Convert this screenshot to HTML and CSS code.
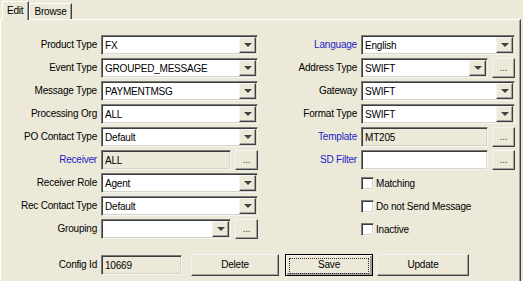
FILE: index.html
```html
<!DOCTYPE html>
<html lang="en">

<head>
    <meta charset="UTF-8">
    <title>Message Config</title>
    <link rel="stylesheet" href="styles.css">
</head>

<body>
    <div class="tabs">
        <div class="tab active">Edit</div>
        <div class="tab">Browse</div>
    </div>

    <div class="pane">
        <div class="form-grid">
            <!-- row 1 -->
            <div class="label">Product Type</div>
            <div class="combo"><span class="value">FX</span><span class="arrow"></span></div>
            <div class="label link">Language</div>
            <div class="combo"><span class="value">English</span><span class="arrow"></span></div>

            <!-- row 2 -->
            <div class="label">Event Type</div>
            <div class="combo"><span class="value">GROUPED_MESSAGE</span><span class="arrow"></span></div>
            <div class="label">Address Type</div>
            <div class="with-btn">
                <div class="combo"><span class="value">SWIFT</span><span class="arrow"></span></div>
                <div class="dots">...</div>
            </div>

            <!-- row 3 -->
            <div class="label">Message Type</div>
            <div class="combo"><span class="value">PAYMENTMSG</span><span class="arrow"></span></div>
            <div class="label">Gateway</div>
            <div class="combo"><span class="value">SWIFT</span><span class="arrow"></span></div>

            <!-- row 4 -->
            <div class="label">Processing Org</div>
            <div class="combo"><span class="value">ALL</span><span class="arrow"></span></div>
            <div class="label">Format Type</div>
            <div class="combo"><span class="value">SWIFT</span><span class="arrow"></span></div>

            <!-- row 5 -->
            <div class="label">PO Contact Type</div>
            <div class="combo"><span class="value">Default</span><span class="arrow"></span></div>
            <div class="label link">Template</div>
            <div class="with-btn">
                <div class="text readonly"><span class="value">MT205</span></div>
                <div class="dots">...</div>
            </div>

            <!-- row 6 -->
            <div class="label link">Receiver</div>
            <div class="with-btn">
                <div class="text readonly"><span class="value">ALL</span></div>
                <div class="dots">...</div>
            </div>
            <div class="label link">SD Filter</div>
            <div class="with-btn">
                <div class="text"><span class="value"></span></div>
                <div class="dots">...</div>
            </div>

            <!-- row 7 -->
            <div class="label">Receiver Role</div>
            <div class="combo"><span class="value">Agent</span><span class="arrow"></span></div>
            <div></div>
            <div class="check"><span class="box"></span>Matching</div>

            <!-- row 8 -->
            <div class="label">Rec Contact Type</div>
            <div class="combo"><span class="value">Default</span><span class="arrow"></span></div>
            <div></div>
            <div class="check"><span class="box"></span>Do not Send Message</div>

            <!-- row 9 -->
            <div class="label">Grouping</div>
            <div class="with-btn">
                <div class="combo"><span class="value"></span><span class="arrow"></span></div>
                <div class="dots">...</div>
            </div>
            <div></div>
            <div class="check"><span class="box"></span>Inactive</div>
        </div>

        <div class="footer">
            <div class="label">Config Id</div>
            <div class="text readonly short"><span class="value">10669</span></div>
            <div class="actions">
                <div class="button">Delete</div>
                <div class="button default"><span>Save</span></div>
                <div class="button wide">Update</div>
            </div>
        </div>
    </div>
</body>

</html>
```

FILE: styles.css
```css
body {
    margin: 0;
    padding: 0;
    width: 523px;
    height: 281px;
    overflow: hidden;
    background-color: #ece9d8;
    font-family: "Liberation Sans", Arial, sans-serif;
    font-size: 10px;
    letter-spacing: -0.2px;
    color: #000;
}

/* tab strip */
.tabs {
    display: flex;
    align-items: flex-end;
    height: 19px;
    padding-left: 2px;
}

.tab {
    height: 15px;
    line-height: 15px;
    padding: 0 4px;
    border: 1px solid #fff;
    border-right-color: #404040;
    border-bottom: none;
    box-shadow: inset -1px 0 #a0a0a0;
}

.tab.active {
    height: 18px;
    line-height: 17px;
    padding: 0 5px 0 4px;
    margin-bottom: -1px;
    position: relative;
    z-index: 1;
    background-color: #ece9d8;
}

.pane {
    height: 270px;
    margin-right: 2px;
    border: 1px solid #fff;
    border-right-color: #404040;
    border-bottom-color: #404040;
    box-shadow: inset -1px -1px #a0a0a0;
}

/* form */
.form-grid {
    display: grid;
    grid-template-columns: 92px 157px 95px 154px;
    grid-auto-rows: 20px;
    column-gap: 4px;
    row-gap: 3px;
    padding: 15px 0 0 4px;
}

.label {
    text-align: right;
    line-height: 20px;
    white-space: nowrap;
}

.label.link {
    color: #2323c8;
}

.combo,
.text {
    display: flex;
    align-items: center;
    height: 20px;
    box-sizing: border-box;
    background-color: #fff;
    border: 1px solid;
    border-color: #7a7a7a #f4f4f4 #f4f4f4 #7a7a7a;
    box-shadow: inset 1px 1px #3c3c3c, inset -1px -1px #d8d4c6;
}

.readonly {
    background-color: #ece9d8;
}

.value {
    flex: 1;
    padding-left: 3px;
    white-space: nowrap;
    overflow: hidden;
}

.arrow {
    width: 17px;
    height: 16px;
    margin-right: 1px;
    box-sizing: border-box;
    background-color: #ece9d8;
    border: 1px solid;
    border-color: #f4f4f4 #404040 #404040 #f4f4f4;
    box-shadow: inset -1px -1px #a0a0a0;
    display: flex;
    align-items: center;
    justify-content: center;
}

.arrow::after {
    content: "";
    border-left: 4px solid transparent;
    border-right: 4px solid transparent;
    border-top: 4px solid #404040;
}

.with-btn {
    display: flex;
    gap: 4px;
}

.with-btn > .combo,
.with-btn > .text {
    flex: 1;
}

.dots {
    width: 23px;
    height: 20px;
    box-sizing: border-box;
    text-align: center;
    line-height: 17px;
    font-size: 10px;
    color: #404040;
    background-color: #ece9d8;
    border: 1px solid;
    border-color: #f4f4f4 #404040 #404040 #f4f4f4;
    box-shadow: inset -1px -1px #a0a0a0;
}

.check {
    display: flex;
    align-items: center;
    gap: 2px;
}

.box {
    width: 13px;
    height: 13px;
    box-sizing: border-box;
    background-color: #fff;
    border: 1px solid;
    border-color: #7a7a7a #f4f4f4 #f4f4f4 #7a7a7a;
    box-shadow: inset 1px 1px #3c3c3c, inset -1px -1px #d8d4c6;
}

/* bottom row */
.footer {
    display: flex;
    align-items: center;
    gap: 4px;
    padding: 15px 0 0 4px;
}

.footer .label {
    width: 92px;
}

.text.short {
    width: 81px;
}

.actions {
    display: flex;
    gap: 6px;
    margin-left: 5px;
}

.button {
    width: 88px;
    height: 22px;
    box-sizing: border-box;
    text-align: center;
    line-height: 19px;
    background-color: #ece9d8;
    border: 1px solid;
    border-color: #f4f4f4 #404040 #404040 #f4f4f4;
    box-shadow: inset -1px -1px #a0a0a0;
}

.button.wide {
    width: 92px;
    margin-left: -2px;
}

.button.default {
    border-color: #000;
    box-shadow: inset 1px 1px #f4f4f4, inset -2px -2px #a0a0a0;
    padding: 3px;
}

.button.default span {
    display: block;
    height: 14px;
    line-height: 12px;
    border: 1px dotted #303030;
}
```
